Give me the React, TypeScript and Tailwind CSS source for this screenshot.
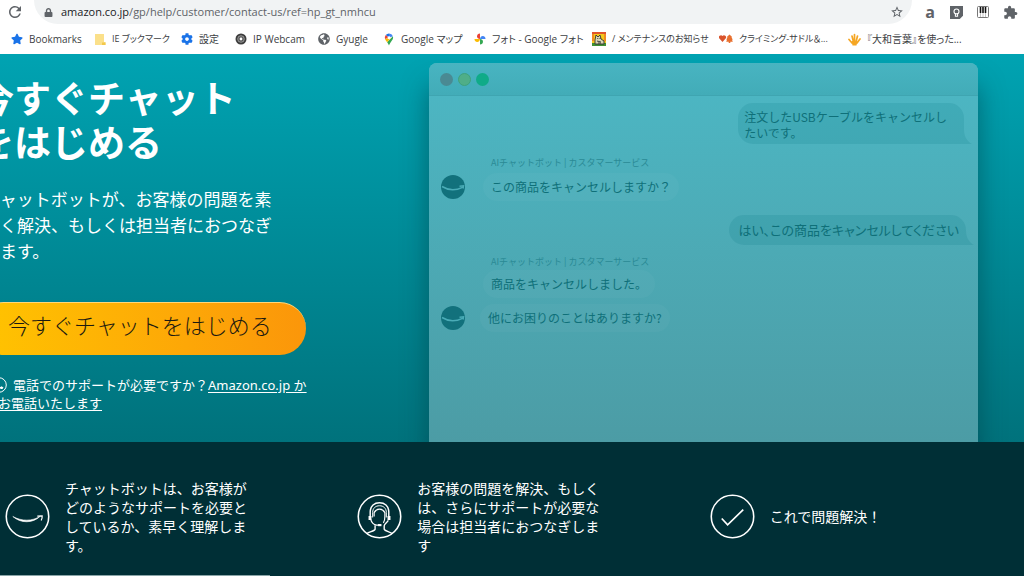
import type { ReactNode } from "react";
import { FaStar, FaCog, FaLock, FaGlobeAmericas } from "react-icons/fa";
import { MdExtension, MdRefresh, MdStarBorder } from "react-icons/md";

const FolderIcon = () => (
  <svg viewBox="0 0 12 13" className="h-[13px] w-3">
    <path d="M1 1h9v8h1.500v3H1z" fill="#fbe08a" />
    <path d="M8 9.500h3.500V12H8z" fill="#f3c84b" />
  </svg>
);

const WebcamIcon = () => (
  <svg viewBox="0 0 12 12" className="size-3">
    <circle cx="6" cy="6" r="5.500" fill="#3d3d3d" />
    <circle cx="6" cy="6" r="3.300" fill="#555" stroke="#aaa" strokeWidth=".8" />
    <circle cx="6" cy="6" r="1.400" fill="#fff" />
  </svg>
);

const PinIcon = () => (
  <svg viewBox="0 0 12 14" className="h-[13px] w-3">
    <path d="M6 0.500A4.500 4.500 0 0 0 2.500 2.200L6 5z" fill="#1a73e8" />
    <path d="M2.500 2.200A4.500 4.500 0 0 0 1.700 6.500L6 5z" fill="#ea4335" />
    <path d="M6 .5a4.500 4.500 0 0 1 4.200 3L6 5z" fill="#4285f4" />
    <path d="M10.200 3.500c.8 2.500-.6 4-1.800 5.600C7 11 6.600 12 6 13.500 5.600 12.300 5 11.300 4 10z" fill="#34a853" />
    <path d="M1.700 6.500C2.300 8 3.200 9 4 10L8 5 6 5z" fill="#fbbc04" />
    <circle cx="6" cy="5" r="1.600" fill="#fff" />
  </svg>
);

const PhotosIcon = () => (
  <svg viewBox="0 0 12 12" className="size-3">
    <path d="M6 6V.5a3 3 0 0 0-3 2.700C3 5 4.500 6 6 6z" fill="#ea4335" />
    <path d="M6 6h5.500a3 3 0 0 0-2.700-3C7 3 6 4.500 6 6z" fill="#4285f4" />
    <path d="M6 6v5.500a3 3 0 0 0 3-2.700C9 7 7.500 6 6 6z" fill="#34a853" />
    <path d="M6 6H.5a3 3 0 0 0 2.700 3C5 9 6 7.500 6 6z" fill="#fbbc04" />
  </svg>
);

const CatIcon = () => (
  <svg viewBox="0 0 14 14" className="size-[14px]">
    <path d="M0 0h14v14H0z" fill="#f3c81c" />
    <path d="M0 0h14v2H0z" fill="#e0542a" />
    <path d="M0 2h2v7H0zM12 2h2v7h-2z" fill="#f08a22" />
    <path d="M0 11h14v3H0z" fill="#3f8f35" />
    <path d="M3 12V8L4 3l2 2 2-2 1 4 3 2v3z" fill="#d8d6b5" stroke="#333" strokeWidth=".9" />
    <path d="M5.500 6l.5 1M8 6v1M5 9l4 1M6 11h3" stroke="#333" strokeWidth=".9" />
  </svg>
);

const HeartTreeIcon = () => (
  <svg viewBox="0 0 14 10" className="h-[10px] w-[14px]">
    <path d="M3.500 8L.4 4.600A1.700 1.700 0 0 1 3.500 2 1.700 1.700 0 0 1 6.600 4.600z" fill="#d9532c" />
    <path d="M10.500 .5l2.600 2.500-.6.500 1.300 2-.8.300.8 2h-2.500V9h-1.600V7.800H7.200l.8-2-.8-.3 1.300-2-.6-.5z" fill="#e8702f" />
  </svg>
);

const HandIcon = () => (
  <svg viewBox="0 0 13 13" className="size-[13px]">
    <path
      d="M4 10L1 6.500M5.500 9L4 3M6.500 9V1.500M8 9l1.500-6M9 10l3-4"
      fill="none"
      stroke="#f5a623"
      strokeWidth="1.700"
      strokeLinecap="round"
    />
    <path d="M3.500 8h6l-1 4.500h-4z" fill="#f5a623" />
  </svg>
);

const bookmarks: { label: string; icon: ReactNode; size: string }[] = [
  { label: "Bookmarks", icon: <FaStar className="size-3 text-[#1a73e8]" />, size: "text-[10px]" },
  { label: "IE ブックマーク", icon: <FolderIcon />, size: "text-[9px]" },
  { label: "設定", icon: <FaCog className="size-3 text-[#1a73e8]" />, size: "text-[10px]" },
  { label: "IP Webcam", icon: <WebcamIcon />, size: "text-[10px]" },
  { label: "Gyugle", icon: <FaGlobeAmericas className="size-3 text-[#5f6368]" />, size: "text-[10px]" },
  { label: "Google マップ", icon: <PinIcon />, size: "text-[10px]" },
  { label: "フォト - Google フォト", icon: <PhotosIcon />, size: "text-[10px]" },
  { label: "/ メンテナンスのお知らせ", icon: <CatIcon />, size: "text-[9px]" },
  { label: "クライミング-サドル＆...", icon: <HeartTreeIcon />, size: "text-[9px]" },
  { label: "『大和言葉』を使った...", icon: <HandIcon />, size: "text-[10px]" },
];

function BrowserBar() {
  return (
    <header className="bg-white font-['Open_Sans','Noto_Sans_CJK_JP',sans-serif] text-[#5f6368]">
      <div className="flex h-6 items-center pr-[6px]">
        <button aria-label="再読み込み" className="ml-[6px] flex">
          <MdRefresh className="size-[18px]" />
        </button>
        <div className="ml-[10px] flex h-6 flex-1 items-center rounded-b-full bg-[#f1f3f4] pr-2 pl-[10px] text-[11px]">
          <FaLock className="size-[9px]" />
          <label htmlFor="url" className="ml-2 text-[#202124]">
            amazon.co.jp
          </label>
          <input
            id="url"
            className="min-w-0 flex-1 bg-transparent outline-none"
            defaultValue="/gp/help/customer/contact-us/ref=hp_gt_nmhcu"
          />
          <button aria-label="ブックマークに追加">
            <MdStarBorder className="size-[14px]" />
          </button>
        </div>
        <div className="ml-3 flex items-center gap-[14px]">
          <button aria-label="Amazon" className="w-3 font-['Open_Sans'] text-base leading-4 font-bold">
            a
          </button>
          <button aria-label="Keep">
            <svg viewBox="0 0 12 12" className="size-[13px]">
              <path d="M0 0h12v9l-3 3H0z" fill="#5f6368" />
              <circle cx="6" cy="5" r="2.300" fill="none" stroke="#fff" />
              <path d="M5 7v2.500h2V7" fill="none" stroke="#fff" />
            </svg>
          </button>
          <button aria-label="ピアノ">
            <svg viewBox="0 0 12 12" className="size-3">
              <rect x=".5" y=".5" width="11" height="11" rx="1" fill="#fff" stroke="#777" />
              <path d="M3.500 1v6M6 1v6M8.500 1v6" stroke="#111" strokeWidth="1.600" />
              <path d="M3.500 7v4M6 7v4M8.500 7v4" stroke="#999" strokeWidth=".6" />
            </svg>
          </button>
          <button aria-label="拡張機能">
            <MdExtension className="size-[15px]" />
          </button>
        </div>
      </div>
      <nav className="grid h-[30px] grid-cols-[83px_87px_54px_83px_65px_91px_118px_127px_129px_1fr] items-center pl-[11px] text-[#3c4043]">
        {bookmarks.map((b) => (
          <a
            key={b.label}
            href="#"
            className={`flex items-center gap-[6px] whitespace-nowrap [font-feature-settings:'palt'] ${b.size}`}
          >
            {b.icon}
            {b.label}
          </a>
        ))}
      </nav>
    </header>
  );
}

function Avatar() {
  return (
    <svg viewBox="0 0 24 24" className="size-6">
      <circle cx="12" cy="12" r="12" fill="#12717c" />
      <path d="M1 11.500c6 3.700 14 4 20.500.8M18.500 11.200l4-.4-.5 2.700" fill="none" stroke="#4aacb7" strokeWidth="1.500" />
    </svg>
  );
}

function UserBubble({ children }: { children: ReactNode }) {
  return (
    <div className="relative self-end rounded-[15px] rounded-br-none bg-[#007080]/15 whitespace-nowrap">
      {children}
      <svg viewBox="0 0 8 14" className="absolute right-[-8px] bottom-0 h-[14px] w-2">
        <path d="M0 0C0 6 3 11.500 8 14H0z" fill="#007080" fillOpacity=".15" />
      </svg>
    </div>
  );
}

function BotBubble({ children }: { children: ReactNode }) {
  return <div className="rounded-full bg-white/3 px-2 py-[6px] whitespace-nowrap">{children}</div>;
}

function ChatWindow() {
  return (
    <section className="mt-[9px] mr-[46px] flex flex-1 flex-col rounded-t-lg bg-[#48bac6] bg-linear-to-b from-[#4cb8c5] to-[#4c9ca5] font-['Noto_Sans_CJK_JP',sans-serif] text-xs leading-4 text-[#0f7079] shadow-[0_22px_26px_rgba(0,60,70,0.55)]">
      <div className="flex h-[33px] items-center gap-[5px] rounded-t-lg border-b border-[#3fa5b1] bg-linear-to-b from-[#48b4c1] to-[#42acb8] pl-[11px]">
        <span className="size-[13px] rounded-full bg-[#4a8a93]" />
        <span className="size-[13px] rounded-full border border-[#3fa27c] bg-[#4fae88]" />
        <span className="size-[13px] rounded-full bg-[#0fab88]" />
      </div>
      <div className="flex flex-col px-3 pt-[7px]">
        <div className="flex flex-col pr-[2px]">
          <UserBubble>
            <p className="pt-[6px] pr-[17px] pb-[3px] pl-[6px]">
              注文したUSBケーブルをキャンセルし
              <br />
              たいです。
            </p>
          </UserBubble>
        </div>
        <p className="mt-[11px] ml-[50px] text-[9px] text-[#2a8a95]">AIチャットボット | カスタマーサービス</p>
        <div className="mt-[2px] flex items-center gap-[18px]">
          <Avatar />
          <BotBubble>この商品をキャンセルしますか？</BotBubble>
        </div>
        <div className="mt-[14px] flex flex-col">
          <UserBubble>
            <p className="py-[7px] pr-[7px] pl-[9px] text-[13px] [font-feature-settings:'palt']">
              はい、この商品をキャンセルしてください
            </p>
          </UserBubble>
        </div>
        <p className="mt-[9px] ml-[50px] text-[9px] text-[#2a8a95]">AIチャットボット | カスタマーサービス</p>
        <div className="ml-[42px] flex">
          <BotBubble>商品をキャンセルしました。</BotBubble>
        </div>
        <div className="mt-[6px] flex items-center gap-[15px]">
          <Avatar />
          <BotBubble>他にお困りのことはありますか?</BotBubble>
        </div>
      </div>
    </section>
  );
}

function Hero() {
  return (
    <main className="flex h-[388px] overflow-hidden bg-linear-to-b from-[#00a3b2] to-[#00727c]">
      <div className="-ml-[23px] w-[452px] shrink-0 whitespace-nowrap text-white">
        <h1 className="mt-[23px] text-[37px] leading-[44px] font-bold">
          今すぐチャット
          <br />
          をはじめる
        </h1>
        <p className="mt-[22px] pl-[6px] text-[17px] leading-[26px]">
          チャットボットが、お客様の問題を素
          <br />
          早く解決、もしくは担当者におつなぎ
          <br />
          します。
        </p>
        <button className="mt-[37px] flex h-[53px] w-[329px] items-center rounded-full border-t border-[#ffd87a] bg-linear-to-r from-[#ffc400] to-[#fb960a] pb-[8px] pl-[31px] text-[22px] font-light text-[#1c1a10]">
          今すぐチャットをはじめる
        </button>
        <div className="mt-[21px] pl-2 text-[13px] leading-[18px]">
          <div className="flex items-center gap-[6px] pl-[6px]">
            <svg viewBox="0 0 16 16" className="size-4">
              <circle cx="8" cy="8" r="7.300" fill="none" stroke="#fff" strokeWidth="1" />
              <path
                d="M4.500 4c-1 3.500 3 8 7 8l1-1.500-2-1.300-1 .8C8 9.300 7 8 6.500 7l.8-1L6 4z"
                fill="#fff"
              />
            </svg>
            <p>
              電話でのサポートが必要ですか？
              <a href="#" className="underline underline-offset-2">
                Amazon.co.jp か
              </a>
            </p>
          </div>
          <a href="#" className="underline underline-offset-2">
            らお電話いたします
          </a>
        </div>
      </div>
      <ChatWindow />
    </main>
  );
}

const ring = <circle cx="23" cy="23" r="21.700" fill="none" stroke="#fff" strokeWidth="1.600" />;

const SmileIcon = () => (
  <svg viewBox="0 0 46 46" className="size-[45px] shrink-0">
    {ring}
    <path d="M8 23c9 5 20 5 28-.3-7.500 7.500-20 7.500-28 .3z" fill="#fff" stroke="#fff" strokeWidth=".6" />
    <path d="M33 22.600l5-.3c.2 2-.2 3.200-1 4.900" fill="none" stroke="#fff" strokeWidth="1.200" />
  </svg>
);

const AgentIcon = () => (
  <svg viewBox="0 0 46 46" className="size-[45px] shrink-0 fill-none stroke-white">
    {ring}
    <path d="M13.500 24v-5.500C13.500 12 18 9 23 9s9.500 3 9.500 9.500V24" strokeWidth="1.500" />
    <path d="M16 24v-5c0-4.500 3-7 7-7s7 2.500 7 7v5" strokeWidth="1" />
    <path d="M17.500 23v-4c1.500-2.500 3-3.500 5.500-3.500s4 1 5.500 3.500v4c0 3-.5 5-1.500 6.500" strokeWidth="1.200" />
    <path d="M13.300 22.500v4M32.700 22.500v4" strokeWidth="3" />
    <path d="M14 26c1 3.500 3.500 5.500 6 5.800h3.500" strokeWidth="1.300" />
    <path d="M21.500 31.800h3.500" strokeWidth="2.200" />
    <path d="M18.500 32v4c-.5 2-6 2.500-8.500 4.500M32 27c-1 2-4 3.500-4.200 5.500V36c.5 2 6 2.500 8.200 4.500" strokeWidth="1.400" />
  </svg>
);

const CheckIcon = () => (
  <svg viewBox="0 0 46 46" className="size-[45px] shrink-0 fill-none stroke-white">
    {ring}
    <path d="M12 25l6 6.500L34 16" strokeWidth="1.700" />
  </svg>
);

function Step({ icon, lines }: { icon: ReactNode; lines: string[] }) {
  return (
    <li className="flex items-center gap-[15px]">
      {icon}
      <p className="text-[14px] leading-[19px] whitespace-nowrap">
        {lines.map((line) => (
          <span key={line} className="block">
            {line}
          </span>
        ))}
      </p>
    </li>
  );
}

export default function App() {
  return (
    <div className="flex min-h-screen flex-col overflow-hidden bg-[#002f36] font-['Noto_Sans','Noto_Sans_CJK_JP',sans-serif]">
      <BrowserBar />
      <Hero />
      <footer className="flex flex-1 flex-col text-white">
        <ul className="-mr-[38px] ml-[5px] grid flex-1 grid-cols-3 items-center pt-[16px]">
          <Step
            icon={<SmileIcon />}
            lines={["チャットボットは、お客様が", "どのようなサポートを必要と", "しているか、素早く理解しま", "す。"]}
          />
          <Step
            icon={<AgentIcon />}
            lines={["お客様の問題を解決、もしく", "は、さらにサポートが必要な", "場合は担当者におつなぎしま", "す"]}
          />
          <Step icon={<CheckIcon />} lines={["これで問題解決！"]} />
        </ul>
        <div className="h-px w-[270px] bg-[#8aa5a8]" />
      </footer>
    </div>
  );
}
